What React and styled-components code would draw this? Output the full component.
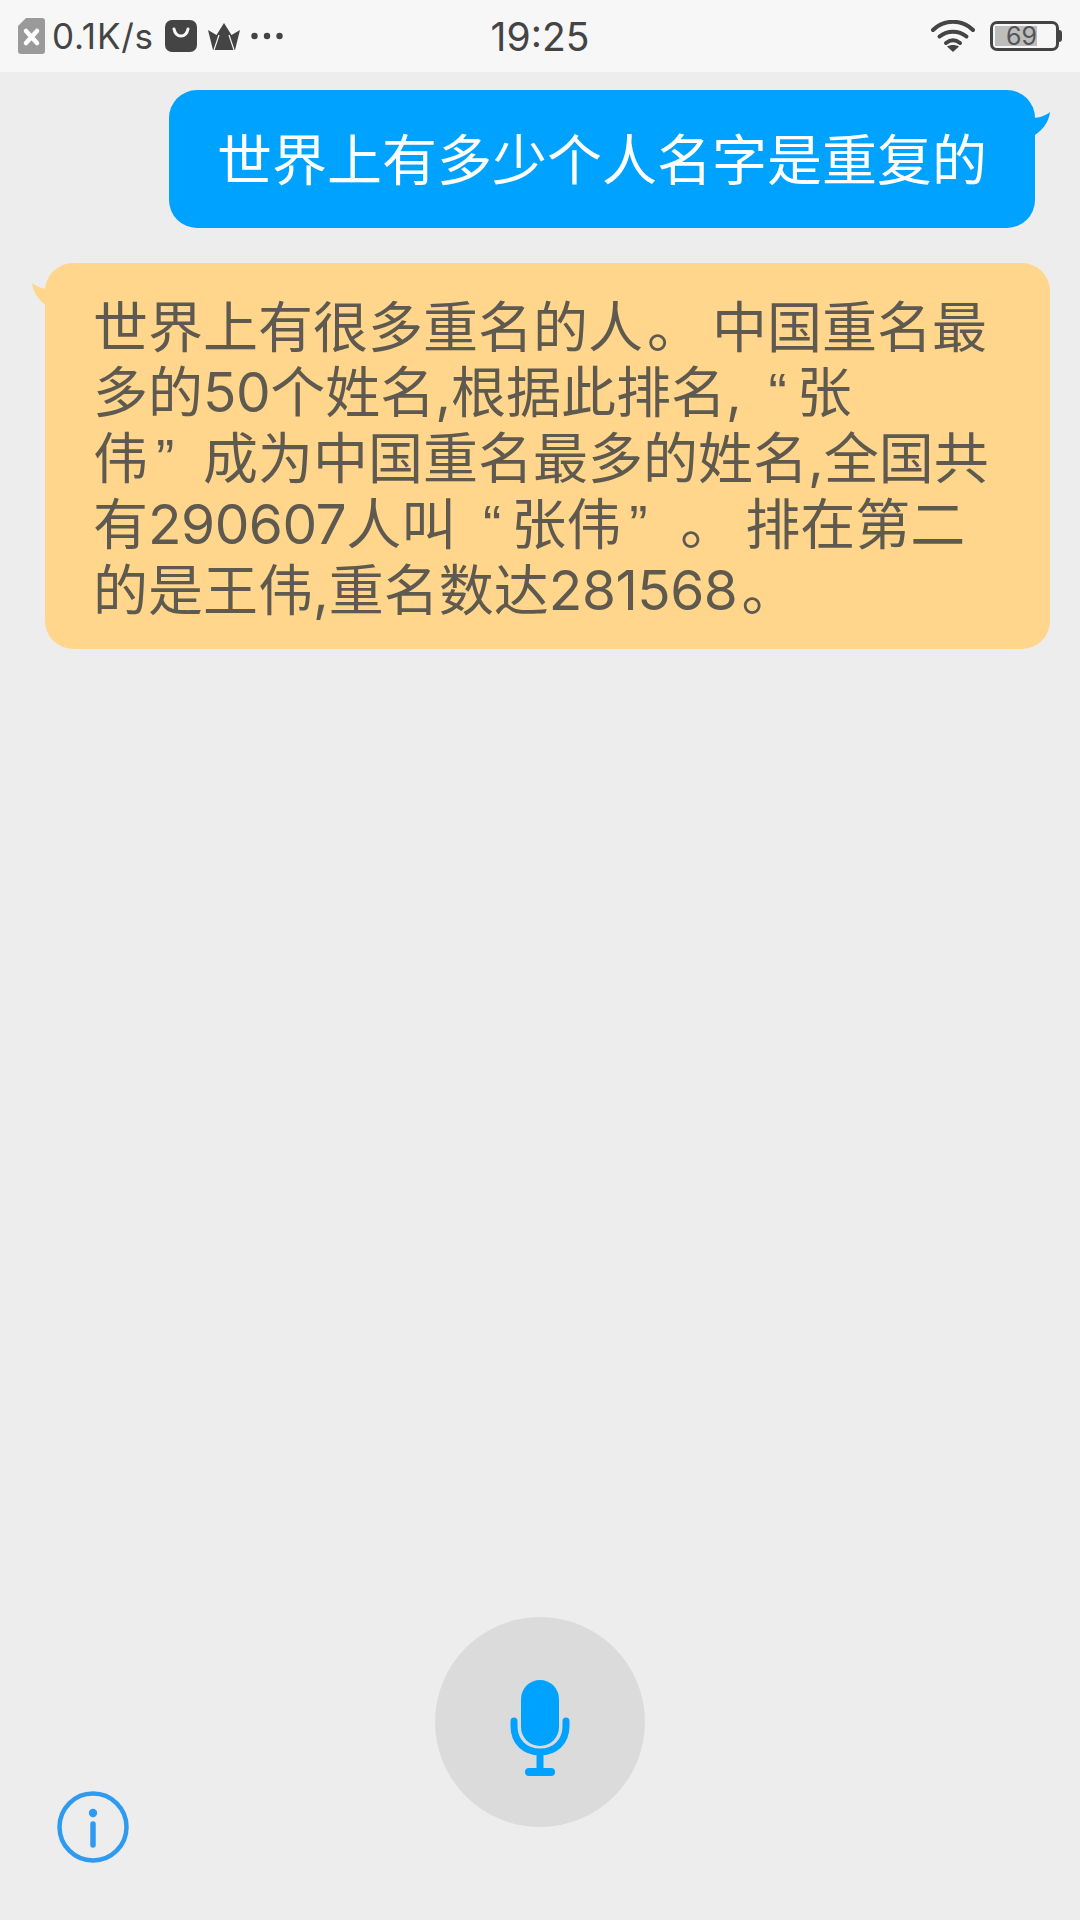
import styled, { createGlobalStyle } from "styled-components"

const GlobalStyle = createGlobalStyle`
  html, body {
    margin: 0;
    padding: 0;
    background: #ededed;
  }
  body {
    font-family: "Inter", "Noto Sans CJK SC", sans-serif;
  }
`

const Screen = styled.div`
  width: 1080px;
  height: 1920px;
  display: flex;
  flex-direction: column;
  background: #ededed;
  overflow: hidden;
`

const StatusBar = styled.div`
  flex: none;
  height: 72px;
  background: #f7f7f7;
  display: grid;
  grid-template-columns: 1fr auto 1fr;
  align-items: center;
  padding: 0 18px;
  color: #444444;
`

const StatusLeft = styled.div`
  display: flex;
  align-items: center;
  gap: 11px;
`

const StatusRight = styled.div`
  display: flex;
  align-items: center;
  justify-content: flex-end;
`

const Speed = styled.span`
  font-size: 35px;
  margin-left: -4px;
  letter-spacing: 0.8px;
`

const Clock = styled.span`
  font-size: 39px;
`

const WifiWrap = styled.div`
  display: flex;
  margin-right: 15px;
`

const BatteryBody = styled.div`
  box-sizing: border-box;
  width: 69px;
  height: 30px;
  border: 3px solid #444444;
  border-radius: 7px;
  display: flex;
  align-items: center;
  padding-left: 2px;
`

const BatteryFill = styled.div`
  box-sizing: border-box;
  height: 20px;
  background: #bdbdbd;
  text-align: right;
  line-height: 20px;
  font-size: 25px;
  color: #555555;
`

const BatteryCap = styled.div`
  width: 3px;
  height: 12px;
  background: #444444;
  border-radius: 0 3px 3px 0;
`

const Chat = styled.div`
  flex: 1;
  display: flex;
  flex-direction: column;
  padding-top: 18px;
  gap: 35px;
`

const Bubble = styled.div`
  position: relative;
  box-sizing: border-box;
  border-radius: 28px;
  font-family: "Inter", "Noto Sans CJK SC", sans-serif;
  font-size: 55px;
  background: ${(props) => (props.$me ? "#00a2ff" : "#ffd68c")};
  color: ${(props) => (props.$me ? "#ffffff" : "#5f5a50")};
`

const Question = styled(Bubble)`
  align-self: flex-end;
  width: 866px;
  height: 138px;
  margin-right: 45px;
  padding-top: 3px;
  display: flex;
  align-items: center;
  justify-content: center;
  line-height: 1;
  white-space: nowrap;
`

const Answer = styled(Bubble)`
  width: 1005px;
  height: 386px;
  margin-left: 45px;
  padding: 32px 0 0 48px;
  line-height: 65px;
`

const Line = styled.div`
  white-space: nowrap;
`

const Num = styled.span`
  letter-spacing: -0.5px;
`

const Quote = styled.span`
  display: inline-block;
  box-sizing: border-box;
  width: 55px;
  font-family: "Liberation Sans", sans-serif;
  text-align: ${(props) => (props.$open ? "right" : "left")};
  ${(props) => (props.$open ? "padding-right: 10px;" : "padding-left: 8px;")}
`

const Stop = styled.span`
  margin: 0 10px 0 4px;
`

const Tail = styled.svg`
  position: absolute;
  top: ${(props) => (props.$side === "right" ? "22px" : "20px")};
  width: 20px;
  height: 26px;
  ${(props) =>
    props.$side === "right"
      ? "right: -15px;"
      : "left: -13px; transform: scaleX(-1);"}
`

const Footer = styled.div`
  flex: none;
  height: 303px;
  position: relative;
  display: flex;
  justify-content: center;
`

const MicButton = styled.button`
  width: 210px;
  height: 210px;
  border: none;
  border-radius: 50%;
  padding: 12px 0 0;
  background: #dbdbdb;
  display: flex;
  align-items: center;
  justify-content: center;
`

const InfoButton = styled.button`
  position: absolute;
  left: 57px;
  top: 174px;
  width: 72px;
  height: 72px;
  border: none;
  padding: 0;
  background: none;
`

function SimIcon() {
  return (
    <svg width="27" height="36" viewBox="0 0 27 36">
      <path d="M8 0H24a3 3 0 0 1 3 3V33a3 3 0 0 1-3 3H3a3 3 0 0 1-3-3V8Z" fill="#9a9a9a" />
      <path d="M8 13 19 25M19 13 8 25" stroke="#fff" strokeWidth="4.5" strokeLinecap="round" />
    </svg>
  )
}

function BagIcon() {
  return (
    <svg width="32" height="32" viewBox="0 0 32 32">
      <rect width="32" height="32" rx="7" fill="#444444" />
      <path d="M9 9c1 5 4 7 7 7s6-2 7-7" fill="none" stroke="#f7f7f7" strokeWidth="3" strokeLinecap="round" />
    </svg>
  )
}

function CrownIcon() {
  return (
    <svg width="32" height="27" viewBox="0 0 32 27">
      <path d="M16 0 23.500 12 32 7 27 27H5L0 7 8.500 12Z" fill="#444444" />
      <path d="M11 12 6 27M21 12 26 27" stroke="#f7f7f7" strokeWidth="1.2" />
    </svg>
  )
}

function DotsIcon() {
  return (
    <svg width="32" height="8" viewBox="0 0 32 8">
      <circle cx="3.500" cy="4" r="3.200" fill="#444444" />
      <circle cx="16" cy="4" r="3.200" fill="#444444" />
      <circle cx="28.500" cy="4" r="3.200" fill="#444444" />
    </svg>
  )
}

function WifiIcon() {
  return (
    <svg width="44" height="32" viewBox="0 0 44 32" fill="none" stroke="#444444" strokeWidth="4" strokeLinecap="round">
      <path d="M2 10C13-1 31-1 42 10" />
      <path d="M8.500 16.500c8-6.500 19-6.500 27 0" />
      <path d="M15 23c4.500-3.500 9.500-3.500 14 0" />
      <path d="M22 32 16 26.500c3.500-2 8.500-2 12 0Z" fill="#444444" stroke="none" />
    </svg>
  )
}

function MicIcon() {
  return (
    <svg width="60" height="96" viewBox="0 0 60 96">
      <rect x="11" y="0" width="38" height="66" rx="19" fill="#00a2ff" />
      <path d="M4 41V46C4 62 15 72 30 72S56 62 56 46V41" fill="none" stroke="#00a2ff" strokeWidth="7" strokeLinecap="round" />
      <path d="M30 72V90" stroke="#00a2ff" strokeWidth="7" />
      <rect x="15" y="88" width="30" height="8" rx="4" fill="#00a2ff" />
    </svg>
  )
}

function InfoIcon() {
  return (
    <svg width="72" height="72" viewBox="0 0 72 72">
      <circle cx="36" cy="36" r="33.500" fill="none" stroke="#2f9bf0" strokeWidth="4.500" />
      <circle cx="36" cy="22" r="4.200" fill="#2f9bf0" />
      <path d="M36 33V54" stroke="#2f9bf0" strokeWidth="5.500" strokeLinecap="round" />
    </svg>
  )
}

function BubbleTail({ side, color }) {
  return (
    <Tail $side={side} viewBox="0 0 20 26">
      <path d="M0 6C7 6 14 5 20 0 19 10 12 20 0 26Z" fill={color} />
    </Tail>
  )
}

export default function App() {
  return (
    <Screen>
      <GlobalStyle />
      <StatusBar>
        <StatusLeft>
          <SimIcon />
          <Speed>0.1K/s</Speed>
          <BagIcon />
          <CrownIcon />
          <DotsIcon />
        </StatusLeft>
        <Clock>19:25</Clock>
        <StatusRight>
          <WifiWrap>
            <WifiIcon />
          </WifiWrap>
          <BatteryBody>
            <BatteryFill style={{ width: `${0.69 * 61}px` }}>69</BatteryFill>
          </BatteryBody>
          <BatteryCap />
        </StatusRight>
      </StatusBar>
      <Chat>
        <Question $me>
          世界上有多少个人名字是重复的
          <BubbleTail side="right" color="#00a2ff" />
        </Question>
        <Answer>
          <Line>
            世界上有很多重名的人<Stop>。</Stop>中国重名最
          </Line>
          <Line>
            多的<Num>50</Num>个姓名,根据此排名,<Quote $open>“</Quote>张
          </Line>
          <Line>
            伟<Quote>”</Quote>成为中国重名最多的姓名,全国共
          </Line>
          <Line>
            有<Num>290607</Num>人叫<Quote $open>“</Quote>张伟<Quote>”</Quote>
            <Stop>。</Stop>排在第二
          </Line>
          <Line>
            的是王伟,重名数达<Num>281568</Num>
            <Stop>。</Stop>
          </Line>
          <BubbleTail side="left" color="#ffd68c" />
        </Answer>
      </Chat>
      <Footer>
        <MicButton>
          <MicIcon />
        </MicButton>
        <InfoButton>
          <InfoIcon />
        </InfoButton>
      </Footer>
    </Screen>
  )
}
